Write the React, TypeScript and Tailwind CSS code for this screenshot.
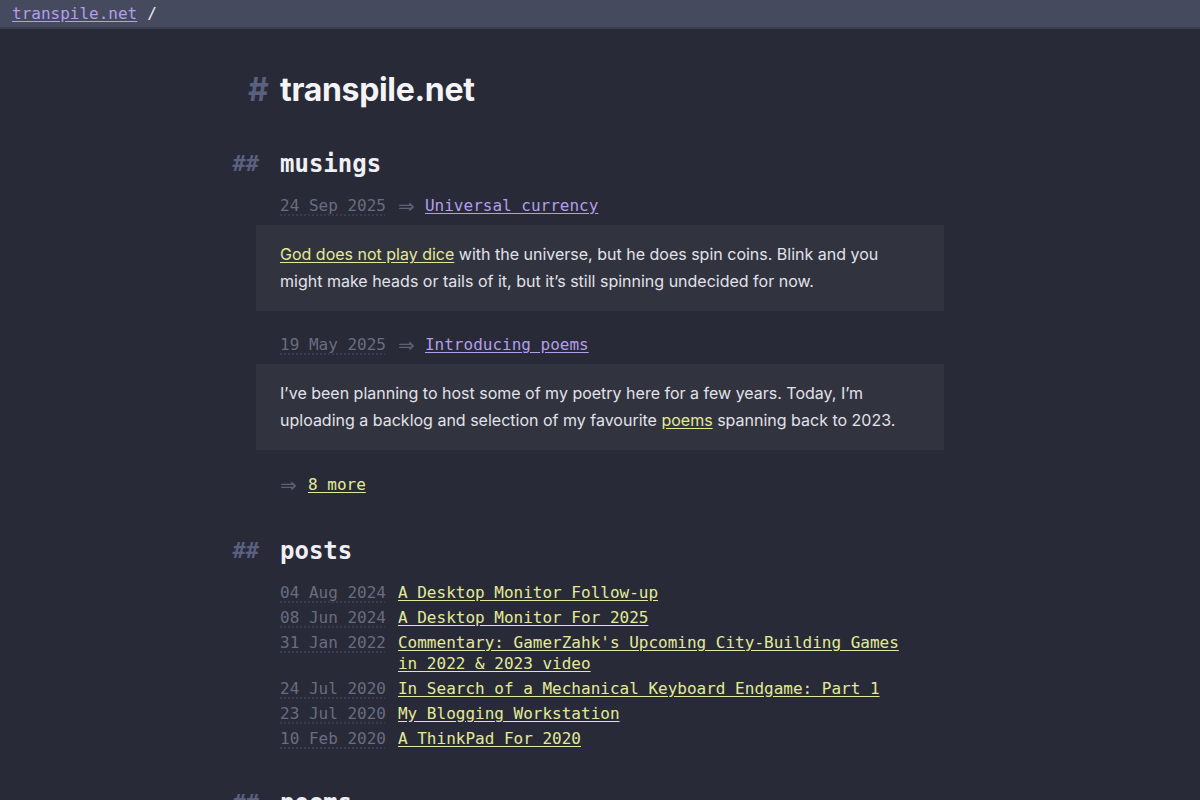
import React from "react";

const mono = "font-['DejaVu_Sans_Mono',monospace]";
const sans = "font-['Inter','Noto_Sans',sans-serif]";

type Musing = {
  date: string;
  title: string;
  body: React.ReactNode;
};

const musings: Musing[] = [
  {
    date: "24 Sep 2025",
    title: "Universal currency",
    body: (
      <>
        <a href="#" className="text-[#e3ea97] underline underline-offset-2">
          God does not play dice
        </a>{" "}
        with the universe, but he does spin coins. Blink and you might make
        heads or tails of it, but it’s still spinning undecided for now.
      </>
    ),
  },
  {
    date: "19 May 2025",
    title: "Introducing poems",
    body: (
      <>
        I’ve been planning to host some of my poetry here for a few years.
        Today, I’m uploading a backlog and selection of my favourite{" "}
        <a href="#" className="text-[#e3ea97] underline underline-offset-2">
          poems
        </a>{" "}
        spanning back to 2023.
      </>
    ),
  },
];

const posts = [
  ["04 Aug 2024", "A Desktop Monitor Follow-up"],
  ["08 Jun 2024", "A Desktop Monitor For 2025"],
  ["31 Jan 2022", "Commentary: GamerZahk's Upcoming City-Building Games in 2022 & 2023 video"],
  ["24 Jul 2020", "In Search of a Mechanical Keyboard Endgame: Part 1"],
  ["23 Jul 2020", "My Blogging Workstation"],
  ["10 Feb 2020", "A ThinkPad For 2020"],
];

function DateStamp({ value }: { value: string }) {
  return (
    <time className="text-[#696d80] underline decoration-dotted decoration-[#3e4153] underline-offset-4 whitespace-pre">
      {value}
    </time>
  );
}

function Arrow() {
  return (
    <span className="inline-block w-4 text-center text-[#5c6079] font-['DejaVu_Sans',sans-serif] text-[20px] leading-none">
      ⇒
    </span>
  );
}

function SectionHeading({ children, className = "" }: { children: React.ReactNode; className?: string }) {
  return (
    <h2 className={`flex text-[24px] leading-8 font-bold text-[#f0f0f4] ${mono} ${className}`}>
      <span className="-ml-12 w-12 pr-[21px] text-right text-[22px] text-[#5a6080]">##</span>
      {children}
    </h2>
  );
}

export default function App() {
  return (
    <div className={`min-h-screen bg-[#282a37] ${sans} text-[#e2e2ea]`}>
      <header className={`h-[29px] bg-[#464a5e] border-b-2 border-[#3a3d4d] px-3 flex items-center ${mono} text-[16px]`}>
        <a href="#" className="text-[#b29ee9] underline underline-offset-2">
          transpile.net
        </a>
        <span className="ml-[10px] text-[#e8e8ee]">/</span>
      </header>

      <main className="mx-auto w-[640px] pt-[41px] pb-20">
        <h1 className="flex text-[32px] leading-[40px] font-bold tracking-[-0.01em] text-[#f4f4f7]">
          <span className="-ml-8 w-8 pr-3 text-right text-[#5a6080]">#</span>
          transpile.net
        </h1>

        <SectionHeading className="mt-[38px]">musings</SectionHeading>

        <div className="mt-[14px]">
          {musings.map((m, i) => (
            <article key={m.title} className={i > 0 ? "mt-[22px]" : ""}>
              <div className={`${mono} text-[16px] leading-6 flex items-center`}>
                <DateStamp value={m.date} />
                <span className="ml-3 flex">
                  <Arrow />
                </span>
                <a href="#" className="ml-[11px] text-[#b29ee9] underline underline-offset-2 whitespace-pre">
                  {m.title}
                </a>
              </div>
              <div className="mt-[7px] -mx-6 px-6 py-4 bg-[#31333f] text-[16px] leading-[27px]">
                {m.body}
              </div>
            </article>
          ))}
        </div>

        <div className={`mt-[23px] ${mono} text-[16px] leading-6 flex items-center`}>
          <span className="flex">
            <Arrow />
          </span>
          <a href="#" className="ml-3 text-[#e3ea97] underline underline-offset-2 whitespace-pre">
            8 more
          </a>
        </div>

        <SectionHeading className="mt-[38px]">posts</SectionHeading>

        <ul className={`mt-[15px] flex flex-col gap-1 ${mono} text-[16px] leading-[21px]`}>
          {posts.map(([date, title]) => (
            <li key={title} className="flex gap-3">
              <span className="shrink-0">
                <DateStamp value={date} />
              </span>
              <span className="flex-1">
                <a href="#" className="text-[#e3ea97] underline underline-offset-2">
                  {title}
                </a>
              </span>
            </li>
          ))}
        </ul>

        <SectionHeading className="mt-[38px]">poems</SectionHeading>
      </main>
    </div>
  );
}
